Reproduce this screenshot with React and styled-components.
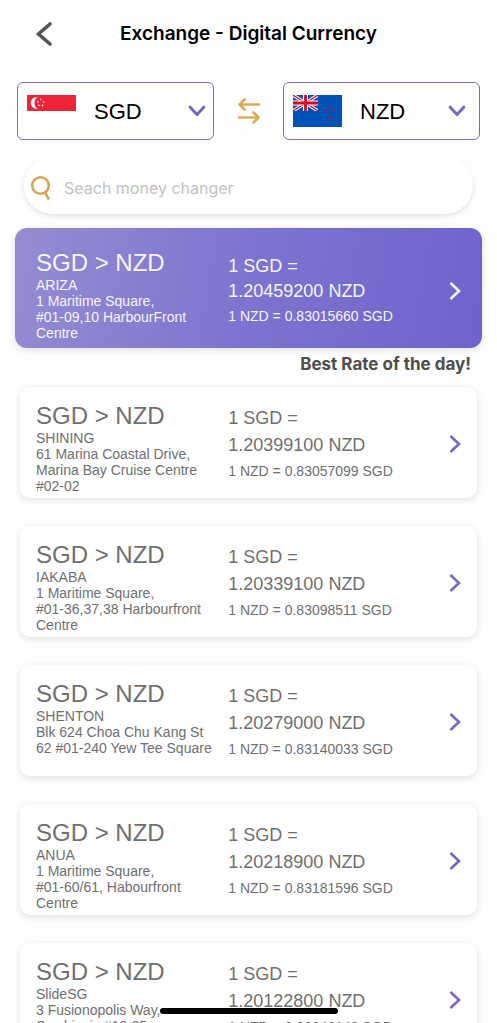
import React, { useState } from "react"
import styled, { createGlobalStyle } from 'styled-components'

const changers = [
    { id: 1, name: 'ARIZA', address: '1 Maritime Square,\n#01-09,10 HarbourFront\nCentre', rate: '1.20459200', inverse: '0.83015660' },
    { id: 2, name: 'SHINING', address: '61 Marina Coastal Drive,\nMarina Bay Cruise Centre\n#02-02', rate: '1.20399100', inverse: '0.83057099' },
    { id: 3, name: 'IAKABA', address: '1 Maritime Square,\n#01-36,37,38 Harbourfront\nCentre', rate: '1.20339100', inverse: '0.83098511' },
    { id: 4, name: 'SHENTON', address: 'Blk 624 Choa Chu Kang St\n62 #01-240 Yew Tee Square', rate: '1.20279000', inverse: '0.83140033' },
    { id: 5, name: 'ANUA', address: '1 Maritime Square,\n#01-60/61, Habourfront\nCentre', rate: '1.20218900', inverse: '0.83181596' },
    { id: 6, name: 'SlideSG', address: '3 Fusionopolis Way,\nSymbiosis #13-25', rate: '1.20122800', inverse: '0.83248143' },
]

function SingaporeFlag() {
    return (
        <Flag viewBox="0 0 49 32" aria-hidden="true">
            <rect width="49" height="16" fill="#ee2536" />
            <path d="M10.5 2.4A5.7 5.7 0 1 0 10.5 13.6A6.6 6.6 0 0 1 10.5 2.4Z" fill="#fff" />
            <g fill="#fff">
                <circle cx="13.8" cy="4.4" r="0.8" />
                <circle cx="10.9" cy="7" r="0.8" />
                <circle cx="16.7" cy="7" r="0.8" />
                <circle cx="12" cy="10.4" r="0.8" />
                <circle cx="15.6" cy="10.4" r="0.8" />
            </g>
        </Flag>
    )
}

function NewZealandFlag() {
    return (
        <Flag viewBox="0 0 49 32" aria-hidden="true">
            <rect width="49" height="32" fill="#0052b4" />
            <svg width="25" height="16" viewBox="0 0 25 16">
                <path d="M0 0L25 16M25 0L0 16" stroke="#fff" strokeWidth="3.2" />
                <path d="M0 0L25 16M25 0L0 16" stroke="#d80027" strokeWidth="1.2" />
                <path d="M12.5 0V16M0 8H25" stroke="#fff" strokeWidth="5" />
                <path d="M12.5 0V16M0 8H25" stroke="#d80027" strokeWidth="2.8" />
            </svg>
            <g fill="#7a2a78">
                <path d="M37 9.6l.6 1.3 1.4.1-1 1 .3 1.4-1.3-.7-1.3.7.3-1.4-1-1 1.4-.1z" />
                <path d="M33.2 14.4l.6 1.3 1.4.1-1 1 .3 1.4-1.3-.7-1.3.7.3-1.4-1-1 1.4-.1z" />
                <path d="M40.6 13.4l.6 1.3 1.4.1-1 1 .3 1.4-1.3-.7-1.3.7.3-1.4-1-1 1.4-.1z" />
                <path d="M37.2 20.6l.8 1.7 1.8.2-1.3 1.2.3 1.8-1.6-.9-1.6.9.3-1.8-1.3-1.2 1.8-.2z" />
            </g>
        </Flag>
    )
}

function Currency({ label, value, onChange, children, inset }) {
    return (
        <CurrencyBox $inset={inset}>
            {children}
            <CurrencySelect aria-label={label} value={value} onChange={(e) => onChange(e.target.value)}>
                <option>SGD</option>
                <option>NZD</option>
            </CurrencySelect>
            <DownIcon viewBox="0 0 18 12" aria-hidden="true">
                <path d="M2.2 2.2L9 9.6L15.8 2.2" />
            </DownIcon>
        </CurrencyBox>
    )
}

function ChangerCard({ changer, best }) {
    return (
        <Card href={'#changer-' + changer.id} $best={best}>
            <div>
                <Pair>SGD &gt; NZD</Pair>
                <Address>{changer.name}</Address>
                <Address>{changer.address}</Address>
            </div>
            <Rates $best={best}>
                <Rate>1 SGD =</Rate>
                <Rate>{changer.rate} NZD</Rate>
                <Inverse>1 NZD = {changer.inverse} SGD</Inverse>
            </Rates>
            <NextIcon viewBox="0 0 14 20" $best={best} aria-hidden="true">
                <path d="M2.5 2L11 10L2.5 18" />
            </NextIcon>
        </Card>
    )
}

function App() {
    const [from, setFrom] = useState('SGD');
    const [to, setTo] = useState('NZD');
    const [search, setSearch] = useState('');

    const found = changers.filter((c) => c.name.toLowerCase().includes(search.toLowerCase()))

    return (
        <Screen>
            <GlobalStyle />
            <Header>
                <IconButton type="button" aria-label="Back">
                    <BackIcon viewBox="0 0 18 26" aria-hidden="true">
                        <path d="M15 3L3.5 13L15 23" />
                    </BackIcon>
                </IconButton>
                <Title>Exchange - Digital Currency</Title>
            </Header>
            <Currencies>
                <Currency label="From currency" value={from} onChange={setFrom} inset={7}>
                    <SingaporeFlag />
                </Currency>
                <IconButton type="button" aria-label="Swap currencies">
                    <SwapIcon viewBox="0 0 24 28" aria-hidden="true">
                        <path d="M22 7.5H2.5M7.5 2.5L2.5 7.5L7.5 12.5M2 20.5H21.5M16.5 15.5L21.5 20.5L16.5 25.5" />
                    </SwapIcon>
                </IconButton>
                <Currency label="To currency" value={to} onChange={setTo} inset={13}>
                    <NewZealandFlag />
                </Currency>
            </Currencies>
            <SearchBar>
                <SearchIcon viewBox="0 0 22 26" aria-hidden="true">
                    <circle cx="10.5" cy="10.5" r="8.3" />
                    <path d="M15 17.5L18.5 23.5" />
                </SearchIcon>
                <SearchInput
                    type="text"
                    aria-label="Search money changer"
                    placeholder="Seach money changer"
                    value={search}
                    onChange={(e) => setSearch(e.target.value)}
                />
            </SearchBar>
            <List>
                {found.map((changer, index) => {
                    return (
                        <li key={changer.id}>
                            <ChangerCard changer={changer} best={index === 0} />
                            {index === 0 && <BestRate>Best Rate of the day!</BestRate>}
                        </li>
                    )
                })}
            </List>
            <HomeBar />
        </Screen>
    )
}

const GlobalStyle = createGlobalStyle`
    * {
        box-sizing: border-box;
    }

    body {
        margin: 0;
        background: #fefefe;
        font-family: "Liberation Sans", Arial, sans-serif;
    }
`;

const Screen = styled.main`
    height: 100vh;
    display: flex;
    flex-direction: column;
    overflow: hidden;
`;

const Header = styled.header`
    display: grid;
    grid-template-columns: 32px 1fr 32px;
    align-items: center;
    padding: 16px 28px 0;
    height: 52px;
    flex-shrink: 0;
`;

const Title = styled.h1`
    margin: 0;
    font: 600 19px/24px Inter, sans-serif;
    text-align: center;
    color: #000;
`;

const IconButton = styled.button`
    display: flex;
    justify-content: center;
    align-items: center;
    padding: 0;
    border: 0;
    background: none;
    cursor: pointer;
`;

const BackIcon = styled.svg`
    width: 18px;
    height: 26px;
    fill: none;
    stroke: #555;
    stroke-width: 3.6;
    stroke-linecap: round;
`;

const SwapIcon = styled.svg`
    width: 24px;
    height: 28px;
    fill: none;
    stroke: #deaa58;
    stroke-width: 2.6;
    stroke-linecap: round;
    stroke-linejoin: round;
`;

const Currencies = styled.div`
    display: grid;
    grid-template-columns: 1fr 69px 1fr;
    padding: 30px 17px 0;
    flex-shrink: 0;
`;

const CurrencyBox = styled.div`
    display: flex;
    align-items: center;
    height: 58px;
    padding: 0 ${(props) => props.$inset}px 0 9px;
    border: 1px solid #7a6dc4;
    border-radius: 6px;
    background: #fff;
`;

const Flag = styled.svg`
    width: 49px;
    height: 32px;
    flex-shrink: 0;
`;

const CurrencySelect = styled.select`
    appearance: none;
    flex: 1;
    min-width: 0;
    height: 56px;
    padding: 0 0 0 18px;
    border: 0;
    background: none;
    font: 22px "Liberation Sans", Arial, sans-serif;
    color: #000;
`;

const DownIcon = styled.svg`
    width: 18px;
    height: 12px;
    flex-shrink: 0;
    fill: none;
    stroke: #7468c4;
    stroke-width: 3;
    stroke-linecap: round;
    stroke-linejoin: round;
    pointer-events: none;
`;

const SearchBar = styled.div`
    display: flex;
    align-items: center;
    height: 57px;
    margin: 17px 24px 0;
    padding: 4px 24px 0 6px;
    border-radius: 28px;
    background: #fff;
    box-shadow: 0 2px 5px rgba(0, 0, 0, 0.12);
    flex-shrink: 0;
`;

const SearchIcon = styled.svg`
    width: 22px;
    height: 26px;
    flex-shrink: 0;
    fill: none;
    stroke: #d8a552;
    stroke-width: 2.6;
    stroke-linecap: round;
`;

const SearchInput = styled.input`
    flex: 1;
    min-width: 0;
    margin-left: 12px;
    padding: 0;
    border: 0;
    outline: none;
    background: none;
    font: 16px/24px Inter, sans-serif;
    color: #555;

    &::placeholder {
        color: #c2c2c2;
        opacity: 1;
    }
`;

const List = styled.ul`
    flex: 1;
    min-height: 0;
    display: flex;
    flex-direction: column;
    gap: 28px;
    margin: 0;
    padding: 14px 15px 28px;
    list-style: none;
    overflow-y: auto;
    scrollbar-width: none;

    li + li {
        margin: 0 5px;
    }

    li:first-child {
        margin-bottom: -17px;
    }
`;

const Card = styled.a`
    display: grid;
    grid-template-columns: 7fr 8fr 14px;
    align-items: start;
    min-height: ${(props) => props.$best ? 120 : 111}px;
    padding: ${(props) => props.$best ? '21px 20px 7px 21px' : '15px 15px 4px 16px'};
    border-radius: ${(props) => props.$best ? 12 : 10}px;
    background: ${(props) => props.$best ? 'linear-gradient(100deg, #958cd2, #7d74d0 50%, #6e63cc)' : '#fff'};
    box-shadow: 0 2px 7px rgba(0, 0, 0, 0.12);
    color: ${(props) => props.$best ? '#f6f4ff' : '#6f6f6f'};
    text-decoration: none;
`;

const Pair = styled.h2`
    margin: 0;
    font-size: 24px;
    line-height: 28px;
    font-weight: 400;
`;

const Address = styled.p`
    margin: 0;
    font-size: 14px;
    line-height: 16px;
    white-space: pre-line;
`;

const Rates = styled.div`
    padding-top: ${(props) => props.$best ? 5 : 3}px;
    line-height: ${(props) => props.$best ? 25 : 27}px;
`;

const Rate = styled.p`
    margin: 0;
    font-size: 18px;
`;

const Inverse = styled.p`
    margin: 0;
    font-size: 14px;
    line-height: 25px;
`;

const NextIcon = styled.svg`
    align-self: center;
    width: 14px;
    height: 20px;
    margin-bottom: 8px;
    fill: none;
    stroke: ${(props) => props.$best ? '#f6f4ff' : '#7468c4'};
    stroke-width: 2.6;
`;

const BestRate = styled.p`
    margin: 4px 11px 0 0;
    font: 700 17px/24px Inter, sans-serif;
    text-align: right;
    color: #4d4d4d;
`;

const HomeBar = styled.div`
    position: fixed;
    left: 50%;
    bottom: 9px;
    width: 178px;
    height: 6px;
    margin-left: -89px;
    border-radius: 3px;
    background: #000;
`;

export default App
